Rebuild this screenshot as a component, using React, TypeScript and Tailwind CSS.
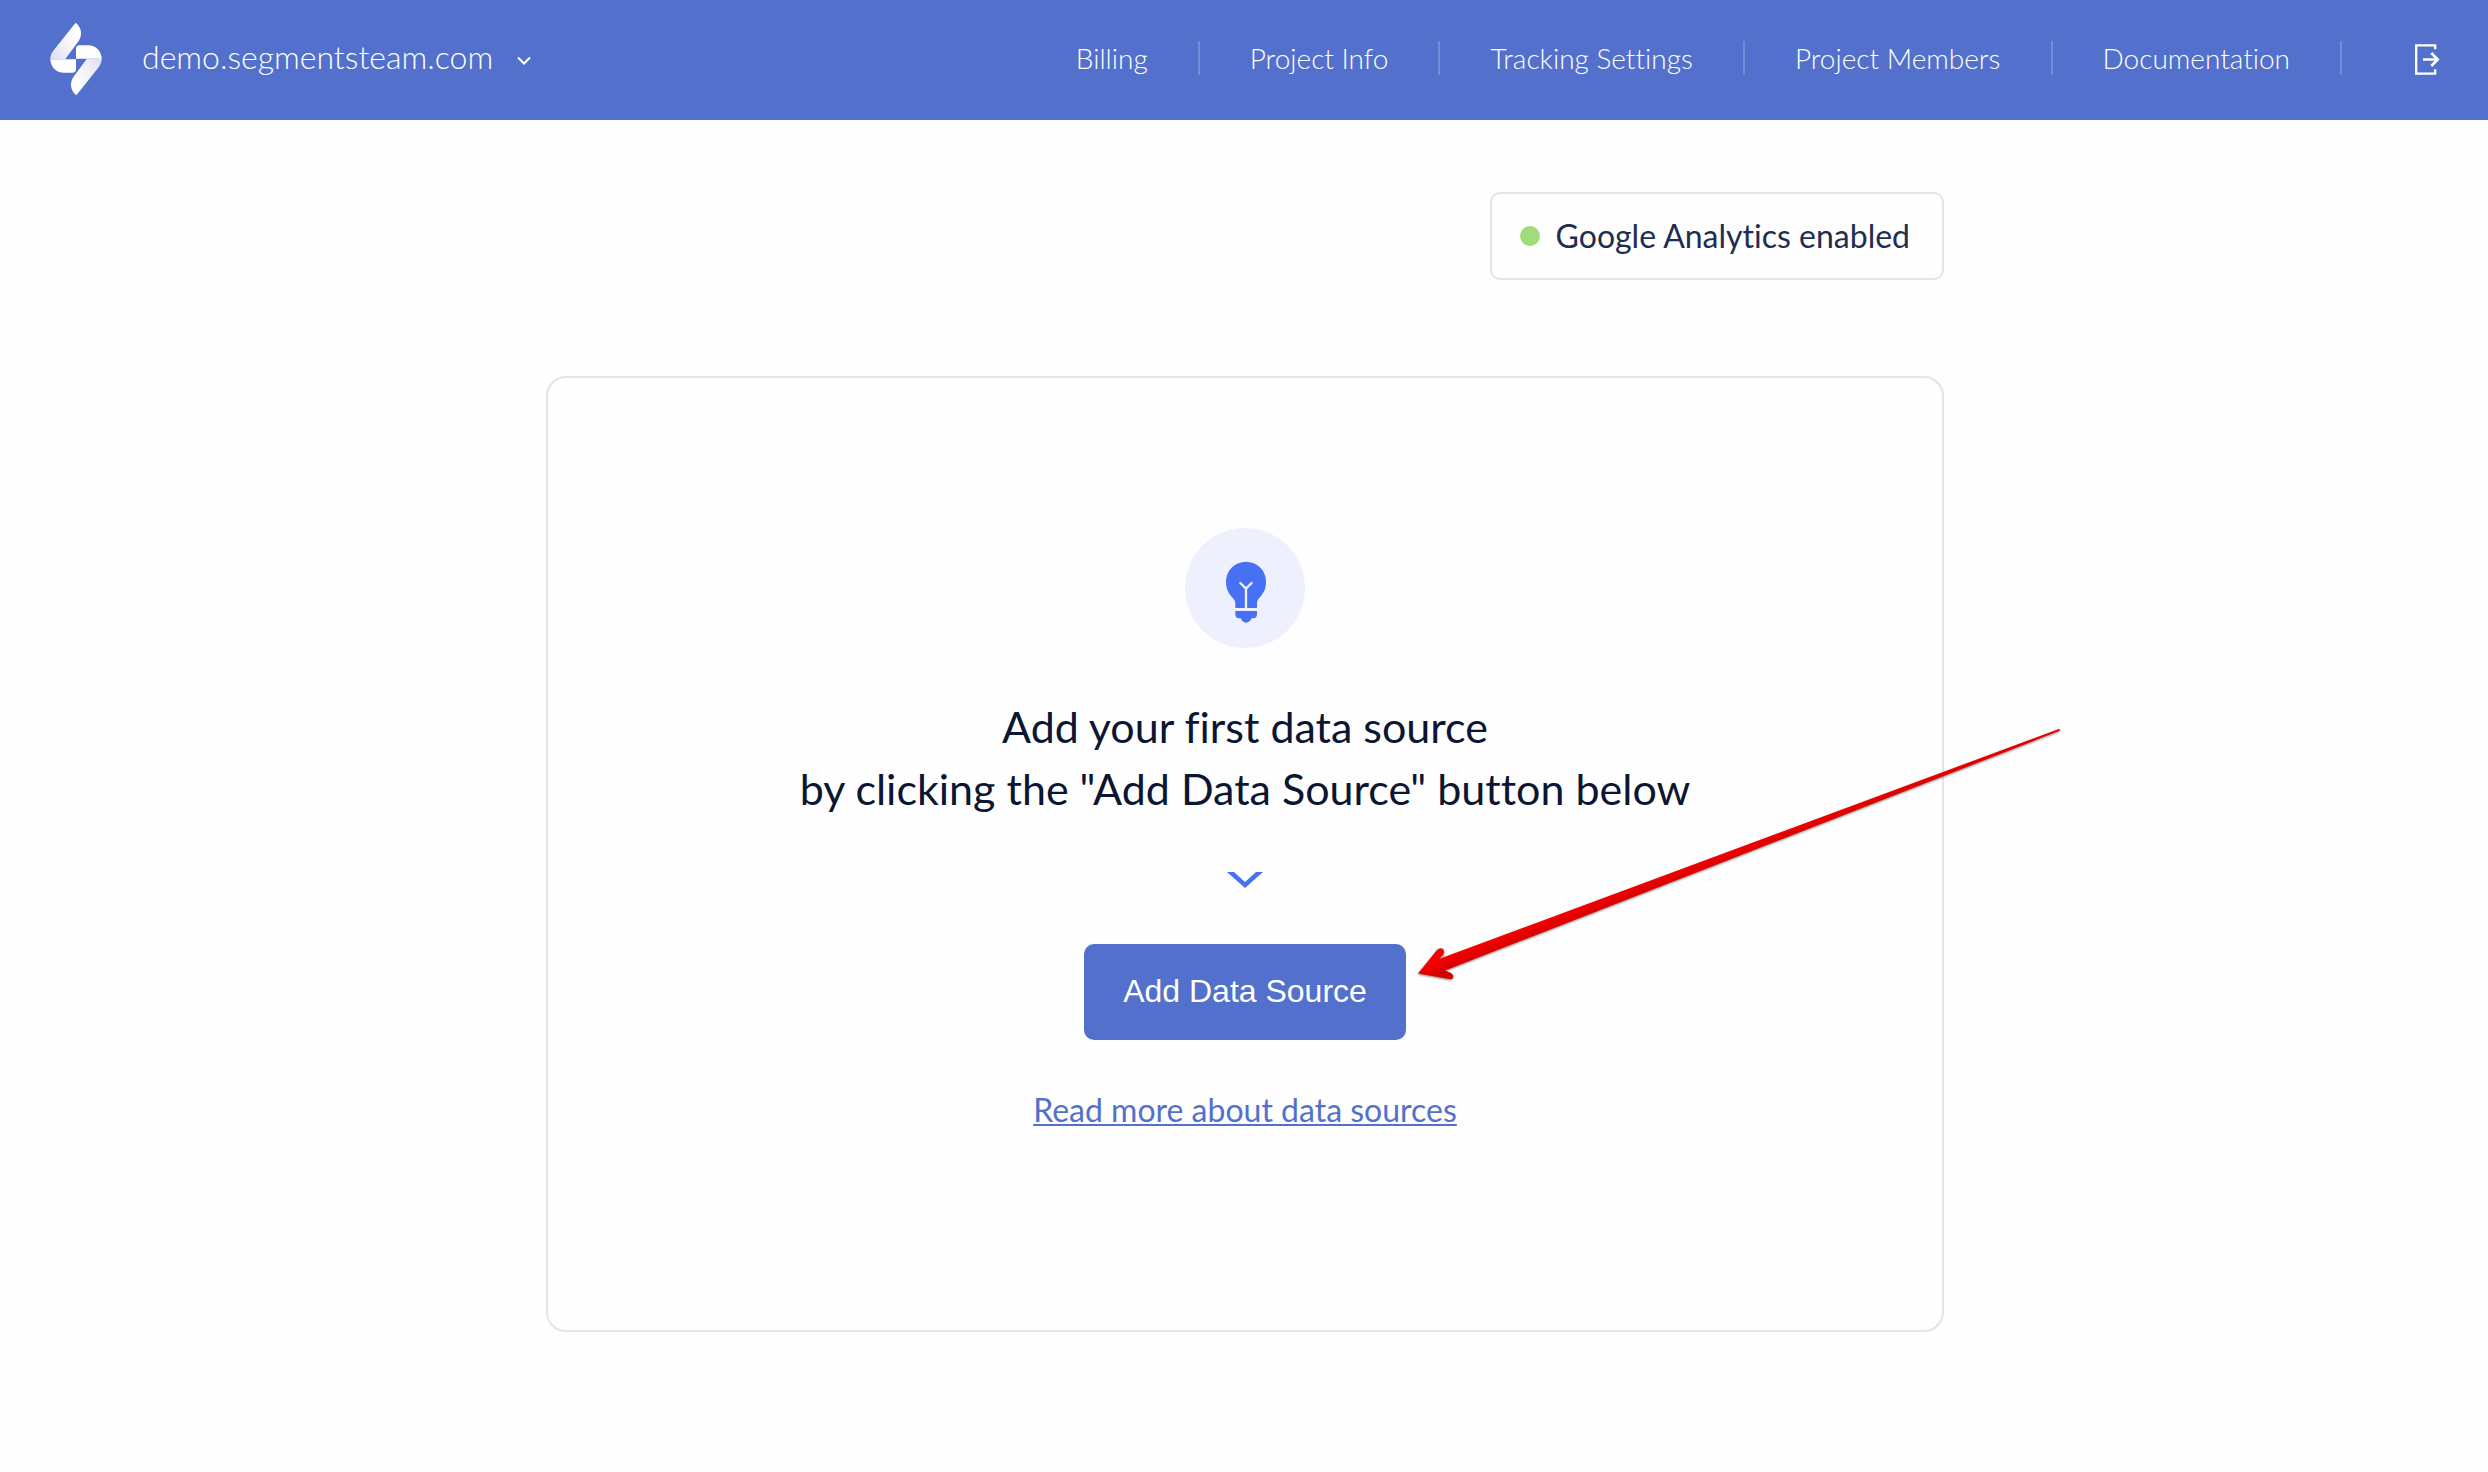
const NAV_ITEMS = ['Billing', 'Project Info', 'Tracking Settings', 'Project Members', 'Documentation'];

function LogoHalf() {
  return (
    <>
      <path
        d="M107 38 C118 47 123 58 123 69 C123 81 119 90 113 97 L76 147 H31 C31 137 35 129 41 121 Z"
        fill="url(#ribbon)"
      />
      <path d="M31 146 Q32 148 40 148 H108 V177 Q108 188 97 188 H72 C48 188 31 170 31 146 Z" fill="#fff" />
    </>
  );
}

function Logo() {
  return (
    <svg viewBox="30 37 156 220" className="h-[74px] w-[52px]" aria-hidden="true">
      <defs>
        <linearGradient id="ribbon" x1="0" y1="0.8" x2="0.8" y2="0.3">
          <stop offset="0" stopColor="#e0e1f2" />
          <stop offset="0.6" stopColor="#f4f4fa" />
          <stop offset="1" stopColor="#ffffff" />
        </linearGradient>
      </defs>
      <LogoHalf />
      <g transform="rotate(180 108 147)">
        <LogoHalf />
      </g>
    </svg>
  );
}

function Header() {
  return (
    <header className="flex h-[120px] items-center bg-[#5270cc] pr-12 pb-0.5 pl-[50px] font-light text-white">
      <a href="#home" aria-label="Home">
        <Logo />
      </a>
      <button type="button" className="ml-10 flex items-center gap-6 pb-1 text-[32px] leading-12">
        demo.segmentsteam.com
        <svg viewBox="0 0 14 10" className="mt-2 h-[10px] w-[14px]" fill="none" stroke="#fff" strokeWidth="2" aria-hidden="true">
          <path d="M1 1.5 L7 7.5 L13 1.5" />
        </svg>
      </button>
      <nav className="ml-auto flex items-center pb-0.5 text-[28px] leading-[34px]">
        {NAV_ITEMS.map((item) => (
          <a key={item} href="#nav" className="border-r-2 border-white/20 px-[50px]">
            {item}
          </a>
        ))}
      </nav>
      <button type="button" aria-label="Log out" className="ml-[73px]">
        <svg viewBox="72 42 75 93" className="h-[31px] w-[25px]" fill="none" stroke="#fff" aria-hidden="true">
          <path d="M132.500 58 V46 H75.500 V131 H132.500 V118" strokeWidth="7" />
          <path d="M96 88.500 H138 M121 69 L140 88.500 L121 108" strokeWidth="8" />
        </svg>
      </button>
    </header>
  );
}

function Bulb() {
  return (
    <svg viewBox="48 54 360 360" className="size-[120px]" aria-hidden="true">
      <circle cx="228" cy="234" r="180" fill="#eef0fe" />
      <g fill="#4770f4">
        <path d="M171 215 a60 60 0 0 1 120 0 c0 24 -10 38 -20 48 q-7 8 -7 17 V294 H199 V280 Q199 271 191 263 C181 253 171 239 171 215 Z" />
        <path d="M199 303 H264 V313 Q264 325 252 325 H248 Q241 338 231 338 Q221 338 215 325 H210 Q199 325 199 313 Z" />
      </g>
      <path
        d="M231 294 V236 M214 219 L231 236 L248 219"
        fill="none"
        stroke="#eef0fe"
        strokeWidth="7"
        strokeLinecap="round"
      />
    </svg>
  );
}

function Arrow() {
  return (
    <svg
      viewBox="1406 720 660 270"
      className="pointer-events-none absolute -top-[224px] left-full h-[270px] w-[660px] drop-shadow-[0_1px_1px_rgba(0,0,0,0.5)]"
      aria-hidden="true"
    >
      <defs>
        <linearGradient id="red" gradientUnits="userSpaceOnUse" x1="1497" y1="937" x2="1502" y2="950">
          <stop offset="0" stopColor="#f80000" />
          <stop offset="1" stopColor="#d40000" />
        </linearGradient>
      </defs>
      <path
        d="M1418 973.500 L1437 950 Q1440 947 1443 949 Q1445 952 1443 955 L1439 959 L2059 729 Q2061 730 2059 731 L1445 970.500 L1451 973 Q1455 976 1452 979 L1449 979 Z"
        fill="url(#red)"
      />
    </svg>
  );
}

export default function App() {
  return (
    <div className="min-h-screen overflow-x-hidden bg-[#fefefe] font-['Lato','Open_Sans',sans-serif] [font-variant-ligatures:none]">
      <Header />
      <main className="mx-auto flex max-w-[1400px] flex-col pt-[72px] pl-0.5">
        <div className="flex h-[88px] items-center gap-4 self-end rounded-[10px] border-2 border-[#e4e4e4] pr-8 pl-7 text-[32px] leading-12 text-[#1f2d50]">
          <span className="size-5 rounded-full bg-[#9edc7c]" />
          Google Analytics enabled
        </div>
        <section className="mt-24 flex flex-col items-center rounded-[20px] border-2 border-[#e4e4e4] pt-[150px] pb-[196px]">
          <Bulb />
          <h1 className="mt-12 text-center text-[43px] leading-[62px] text-[#0c1633]">
            Add your first data source
            <br />
            by clicking the "Add Data Source" button below
          </h1>
          <svg viewBox="0 0 36 16" className="mt-[52px] h-4 w-9" fill="#4770f4" aria-hidden="true">
            <path d="M0 0 H7 L18 10 L29 0 H36 L18 16 Z" />
          </svg>
          <div className="relative mt-14">
            <button
              type="button"
              className="h-24 rounded-[10px] bg-[#5270cc] px-[39px] pb-0.5 font-['Liberation_Sans',sans-serif] text-[32px] leading-12 text-white"
            >
              Add Data Source
            </button>
            <Arrow />
          </div>
          <a
            href="#docs"
            className="mt-[46px] text-[32px] leading-12 text-[#5270cc] underline decoration-2 underline-offset-2"
          >
            Read more about data sources
          </a>
        </section>
      </main>
    </div>
  );
}
